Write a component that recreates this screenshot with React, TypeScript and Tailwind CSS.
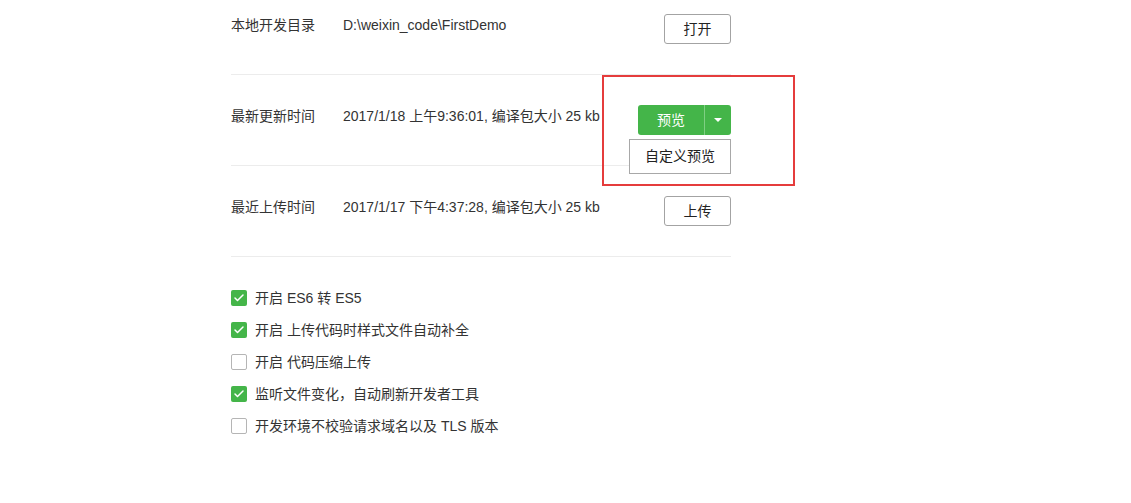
import { Check } from 'lucide-react';

const font = { fontFamily: '"Liberation Sans", "Noto Sans CJK SC", sans-serif' };

const OPTIONS = [
  { label: '开启 ES6 转 ES5', checked: true },
  { label: '开启 上传代码时样式文件自动补全', checked: true },
  { label: '开启 代码压缩上传', checked: false },
  { label: '监听文件变化，自动刷新开发者工具', checked: true },
  { label: '开发环境不校验请求域名以及 TLS 版本', checked: false },
];

function OutlineButton({ children }: { children: React.ReactNode }) {
  return (
    <button className="flex h-[30px] w-[67px] items-center justify-center rounded-[3px] border border-[#a3a3a3] bg-white text-[14px] text-[#222]">
      {children}
    </button>
  );
}

function Row({
  label,
  value,
  first,
  action,
}: {
  label: string;
  value: string;
  first?: boolean;
  action: React.ReactNode;
}) {
  return (
    <div
      className={`flex items-start border-b border-[#ececec] pb-[30px] ${first ? 'pt-[14px]' : 'pt-[30px]'}`}
    >
      <div className="w-[112px] text-[14px] leading-[22px] text-[#333]">{label}</div>
      <div className="flex-1 text-[14px] leading-[22px] text-[#333]">{value}</div>
      {action}
    </div>
  );
}

export default function App() {
  return (
    <div className="relative h-[503px] w-[1131px] overflow-hidden bg-white" style={font}>
      <div className="w-[731px] pl-[231px]">
        <Row
          first
          label="本地开发目录"
          value="D:\weixin_code\FirstDemo"
          action={<OutlineButton>打开</OutlineButton>}
        />
        <Row
          label="最新更新时间"
          value="2017/1/18 上午9:36:01, 编译包大小 25 kb"
          action={
            <div className="relative">
              <div className="flex h-[30px] w-[93px] overflow-hidden rounded-[3px] bg-[#44b549] text-white">
                <span className="flex flex-1 items-center justify-center text-[14px]">预览</span>
                <span className="flex w-[27px] items-center justify-center border-l border-[#7fcf83]">
                  <svg width="8" height="4" viewBox="0 0 8 4">
                    <path d="M0 0h8L4 4z" fill="#fff" />
                  </svg>
                </span>
              </div>
              <div className="absolute right-0 top-[34px] flex h-[35px] w-[102px] items-center justify-center border border-[#a8a8a8] bg-white text-[14px] text-[#222]">
                自定义预览
              </div>
            </div>
          }
        />
        <Row
          label="最近上传时间"
          value="2017/1/17 下午4:37:28, 编译包大小 25 kb"
          action={<OutlineButton>上传</OutlineButton>}
        />

        <div className="flex flex-col pt-[25px]">
          {OPTIONS.map((opt) => (
            <label key={opt.label} className="flex h-[32px] items-center gap-[8px]">
              {opt.checked ? (
                <span className="flex h-[16px] w-[16px] items-center justify-center rounded-[2px] bg-[#44b549]">
                  <Check className="h-[12px] w-[12px] text-white" strokeWidth={3} />
                </span>
              ) : (
                <span className="h-[16px] w-[16px] rounded-[2px] border border-[#b5b5b5] bg-white" />
              )}
              <span className="text-[14px] text-[#333]">{opt.label}</span>
            </label>
          ))}
        </div>
      </div>

      {/* annotation box */}
      <div className="absolute left-[602px] top-[75px] h-[111px] w-[193px] border-[2px] border-[#e53c3c]" />
    </div>
  );
}
